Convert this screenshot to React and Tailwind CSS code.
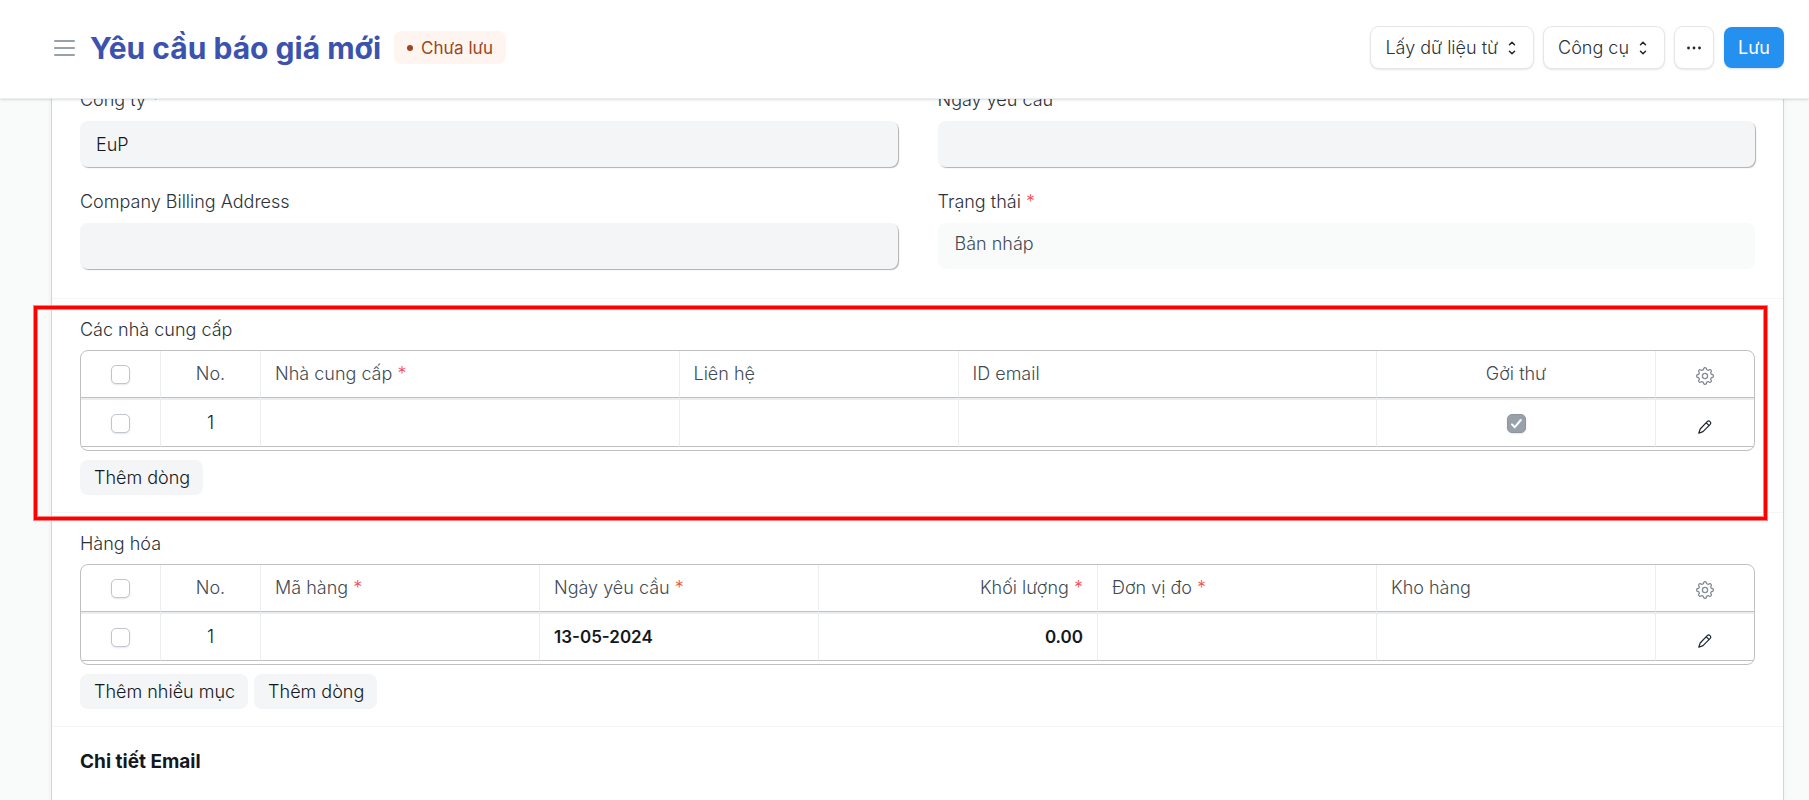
import { useState } from "react";

/* ===================== */
/* DATA */
/* ===================== */
const supplierColumns = [
  { label: "Nhà cung cấp", required: true, span: 3 },
  { label: "Liên hệ", span: 2 },
  { label: "ID email", span: 3 },
  { label: "Gởi thư", span: 2, align: "center", check: true },
];

const itemColumns = [
  { label: "Mã hàng", required: true, span: 2 },
  { label: "Ngày yêu cầu", required: true, span: 2, value: "13-05-2024" },
  { label: "Khối lượng", required: true, span: 2, align: "right", value: "0.00" },
  { label: "Đơn vị đo", required: true, span: 2 },
  { label: "Kho hàng", span: 2 },
];

const alignClass = {
  left: "text-left",
  center: "text-center",
  right: "text-right",
};

export default function App() {
  return (
    <div
      className="flex h-screen flex-col overflow-hidden bg-[#f9fafa] text-lg leading-7 font-light text-[#12181d]"
      style={{ fontFamily: 'Inter, "Noto Sans", sans-serif' }}
    >
      {/* HEADER */}
      <header className="relative z-10 flex shrink-0 items-center justify-between border-b border-[#ebeef0] bg-white pt-[27px] pr-[25px] pb-[30px] pl-[54px] shadow-sm">
        <div className="flex items-center">
          <button type="button" aria-label="Menu" className="mr-[15px] text-[#98a1a9]">
            <MenuIcon />
          </button>
          <h1 className="text-3xl font-bold text-[#3b53ae]">Yêu cầu báo giá mới</h1>
          <span className="ml-[13px] flex h-[33px] items-center gap-2 rounded-lg bg-[#fff5f0] px-[13px] text-[17px] font-normal text-[#9c4621]">
            <span className="size-1.5 rounded-full bg-[#9c4621]" />
            Chưa lưu
          </span>
        </div>

        <div className="flex items-center gap-[11px]">
          <HeaderButton>
            Lấy dữ liệu từ
            <SelectIcon />
          </HeaderButton>
          <HeaderButton>
            Công cụ
            <SelectIcon />
          </HeaderButton>
          <button
            type="button"
            aria-label="Thêm"
            className="h-[41px] rounded-lg bg-white px-3 shadow-[0_0_0_1px_#e6e6e6,0_1px_3px_rgba(0,0,0,0.2)]"
          >
            <DotsIcon />
          </button>
          <button
            type="button"
            className="h-[41px] rounded-lg bg-[#2490ef] px-3.5 font-normal text-white shadow-sm"
          >
            Lưu
          </button>
        </div>
      </header>

      {/* FORM */}
      <main className="mr-[25px] ml-[51px] flex min-h-0 flex-1 flex-col">
        <form className="-mt-[13px] flex-1 border-x border-[#d1d5d8] bg-white shadow-[0_0_6px_rgba(0,0,0,0.05)]">
          <section className="grid grid-cols-2 gap-x-10 gap-y-[21px] border-b border-[#f4f5f6] px-7 pb-[29px]">
            <Field id="company" label="Công ty" required defaultValue="EuP" />
            <Field id="date" label="Ngày yêu cầu" />
            <Field id="billing" label="Company Billing Address" />
            <div>
              <p className="mb-[7px] text-[#2b3238]">
                Trạng thái <Required />
              </p>
              <div className="h-[46px] rounded-lg bg-[#f9fafa] px-[17px] pt-[7px] text-[#424b53]">
                Bản nháp
              </div>
            </div>
          </section>

          <section className="relative border-b border-[#f4f5f6] px-7 py-[17px]">
            <ChildTable title="Các nhà cung cấp" columns={supplierColumns} />
            <div className="mt-[9px] flex gap-1.5">
              <GridButton>Thêm dòng</GridButton>
            </div>
            {/* highlight frame */}
            <div className="pointer-events-none absolute top-[7px] right-4 -bottom-2 -left-[18px] border-3 border-[#ff0000] shadow-[0_0_0_1px_#ff8080,inset_0_0_0_1px_#ff8080]" />
          </section>

          <section className="border-b border-[#f4f5f6] px-7 py-[17px]">
            <ChildTable title="Hàng hóa" columns={itemColumns} />
            <div className="mt-[9px] flex gap-1.5">
              <GridButton>Thêm nhiều mục</GridButton>
              <GridButton>Thêm dòng</GridButton>
            </div>
          </section>

          <section className="px-7 pt-[21px]">
            <h2 className="text-[19px] font-bold">Chi tiết Email</h2>
          </section>
        </form>
      </main>
    </div>
  );
}

/* ===================== */
/* UI HELPERS */
/* ===================== */

function Required() {
  return <span className="text-[#f04f4f]">*</span>;
}

function HeaderButton({ children }) {
  return (
    <button
      type="button"
      className="flex h-[41px] items-center gap-2.5 rounded-lg bg-white pr-[17px] pl-3.5 text-[#2b3238] shadow-[0_0_0_1px_#e6e6e6,0_1px_3px_rgba(0,0,0,0.2)]"
    >
      {children}
    </button>
  );
}

function GridButton({ children }) {
  return (
    <button type="button" className="h-[35px] rounded-lg bg-[#f4f5f6] pr-[13px] pl-3.5">
      {children}
    </button>
  );
}

function Field({ id, label, required, defaultValue }) {
  return (
    <div>
      <label htmlFor={id} className="mb-[7px] block text-[#2b3238]">
        {label} {required && <Required />}
      </label>
      <input
        id={id}
        type="text"
        defaultValue={defaultValue}
        className="block h-[46px] w-full rounded-lg bg-[#f4f5f6] px-4 shadow-[1px_1px_1px_#b0b0b0] outline-none"
      />
    </div>
  );
}

function Checkbox({ label, checked = false }) {
  const [on, setOn] = useState(checked);

  return (
    <span className="relative mx-auto flex w-fit">
      <input
        type="checkbox"
        aria-label={label}
        checked={on}
        onChange={() => setOn(!on)}
        className="size-[19px] appearance-none rounded-[5px] border border-[#c0c6cc] bg-white shadow-[0_1px_2px_rgba(0,0,0,0.1)] checked:border-[#8d969e] checked:bg-[#98a1a9]"
      />
      {on && (
        <svg
          viewBox="0 0 19 19"
          className="pointer-events-none absolute inset-0 size-[19px] fill-none stroke-white stroke-2"
          strokeLinecap="round"
          strokeLinejoin="round"
        >
          <path d="M5 10.4 7.8 13.2l6-7.2" />
        </svg>
      )}
    </span>
  );
}

function ChildTable({ title, columns }) {
  const head = "h-[47px] border-b border-b-[#c0c0c0] p-0 font-light";
  const cell = "h-[49px] border-t-2 border-b border-t-[#ebeef0] border-b-[#c0c0c0] p-0";
  const divider = "border-r border-r-[#ebeef0]";

  return (
    <>
      <p className="mb-1.5 text-[#2b3238]">{title}</p>
      <div className="overflow-hidden rounded-lg border border-[#c0c0c0] pb-[3px]">
        <table className="w-full table-fixed border-separate border-spacing-0">
          <colgroup>
            <col className="w-20" />
            <col className="w-[100px]" />
            <col span={10} />
            <col className="w-[98px]" />
          </colgroup>
          <thead className="text-[#424b53]">
            <tr>
              <th className={`${head} ${divider}`}>
                <Checkbox label="Chọn tất cả" />
              </th>
              <th className={`${head} ${divider}`}>No.</th>
              {columns.map((c) => (
                <th
                  key={c.label}
                  colSpan={c.span}
                  className={`${head} ${divider} ${alignClass[c.align || "left"]}`}
                >
                  <span className="px-3.5">
                    {c.label} {c.required && <Required />}
                  </span>
                </th>
              ))}
              <th className={head}>
                <button type="button" aria-label="Cài đặt" className="mx-auto mt-1 block">
                  <GearIcon />
                </button>
              </th>
            </tr>
          </thead>
          <tbody>
            <tr>
              <td className={`${cell} ${divider}`}>
                <Checkbox label="Chọn dòng 1" />
              </td>
              <td className={`${cell} ${divider} text-center`}>1</td>
              {columns.map((c) => (
                <td
                  key={c.label}
                  colSpan={c.span}
                  className={`${cell} ${divider} text-[17px] font-semibold ${alignClass[c.align || "left"]}`}
                >
                  {c.check ? (
                    <Checkbox label={c.label} checked />
                  ) : (
                    <span className="px-3.5">{c.value}</span>
                  )}
                </td>
              ))}
              <td className={cell}>
                <button type="button" aria-label="Sửa" className="mx-auto mt-2 block">
                  <PencilIcon />
                </button>
              </td>
            </tr>
          </tbody>
        </table>
      </div>
    </>
  );
}

/* ===================== */
/* ICONS */
/* ===================== */

function MenuIcon() {
  return (
    <svg width="21" height="18" viewBox="0 0 21 18" className="stroke-current stroke-2">
      <path d="M1 2h19M1 9h19M1 16h19" strokeLinecap="round" />
    </svg>
  );
}

function SelectIcon() {
  return (
    <svg
      width="8"
      height="14"
      viewBox="0 0 8 14"
      className="fill-none stroke-[#1f272e]"
      strokeWidth="1.5"
      strokeLinecap="round"
      strokeLinejoin="round"
    >
      <path d="M1.5 3.7 4 1.2 6.5 3.7M1.5 10.3 4 12.8 6.5 10.3" />
    </svg>
  );
}

function DotsIcon() {
  return (
    <svg width="14" height="4" viewBox="0 0 14 4" className="fill-[#1f272e]">
      <circle cx="1.5" cy="2" r="1.4" />
      <circle cx="7" cy="2" r="1.4" />
      <circle cx="12.5" cy="2" r="1.4" />
    </svg>
  );
}

// eight rounded teeth, each one bulging between two valleys
const gearPath = (() => {
  const at = (r, deg) => {
    const a = (deg * Math.PI) / 180;
    return `${(9 + r * Math.cos(a)).toFixed(2)} ${(9 + r * Math.sin(a)).toFixed(2)}`;
  };
  let d = `M${at(6.7, -13)}`;
  for (let i = 0; i < 8; i++) {
    const t = i * 45;
    d += `Q${at(8, t - 12)} ${at(8.3, t - 5)}L${at(8.3, t + 5)}Q${at(8, t + 12)} ${at(6.7, t + 13)}Q${at(6, t + 22)} ${at(6.7, t + 32)}`;
  }
  return d + "Z";
})();

function GearIcon() {
  return (
    <svg
      width="18"
      height="18"
      viewBox="0 0 18 18"
      className="fill-none stroke-[#858c93]"
      strokeWidth="1.3"
      strokeLinejoin="round"
    >
      <path d={gearPath} />
      <circle cx="9" cy="9" r="2.6" />
    </svg>
  );
}

function PencilIcon() {
  return (
    <svg
      width="14"
      height="14"
      viewBox="0 0 14 14"
      className="fill-none stroke-[#1f272e]"
      strokeWidth="1.2"
      strokeLinecap="round"
      strokeLinejoin="round"
    >
      <path d="M9.2 1.6Q10.6.3 12 1.6q1.4 1.4.2 2.8L5 11.6.8 13.2 2.2 9ZM8.2 2.8l2.9 2.8" />
    </svg>
  );
}
